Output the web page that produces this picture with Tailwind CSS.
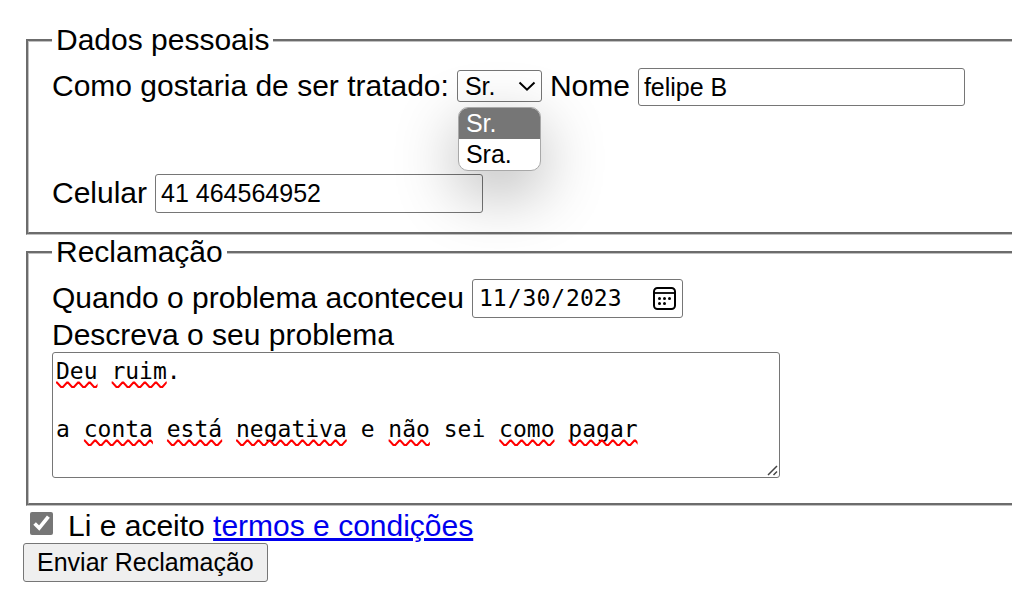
<!DOCTYPE html>
<html lang="pt-BR">
<head>
<meta charset="utf-8">
<meta name="viewport" content="width=device-width, initial-scale=1">
<title>Reclamação</title>
<script src="https://cdn.jsdelivr.net/npm/@tailwindcss/browser@4"></script>
</head>
<body class="overflow-x-hidden bg-white text-black">
<form class="pt-[23px] pl-[26px] font-['Liberation_Sans',Arial,sans-serif] text-[30px] leading-[34px]">
  <fieldset class="border-[3px] border-r-0 [border-style:groove] border-[#c0c0c0] pt-[11px] pr-6 pb-[19px] pl-[23px]">
    <legend class="px-1">Dados pessoais</legend>
    <div class="flex items-center gap-2">
      <label for="trato" class="pb-[2px] whitespace-nowrap">Como gostaria de ser tratado:</label>
      <div class="relative pb-[2px]">
        <select id="trato" class="block h-8 w-[85px] appearance-none rounded-[3px] border border-[#767676] bg-white pl-[7px] text-[25px] leading-[29px]">
          <option selected>Sr.</option>
          <option>Sra.</option>
        </select>
        <svg class="pointer-events-none absolute top-[11px] right-[6px] h-[11px] w-[18px]" viewBox="0 0 18 11" fill="none" stroke="#000" stroke-width="2" aria-hidden="true"><path d="M1.500 1.500 9 8.700l7.500-7.200"/></svg>
        <ul role="listbox" aria-label="Opções de tratamento" class="absolute top-[37px] left-px z-10 w-[83px] overflow-hidden rounded-[10px] border border-[#a8a8a8] bg-white text-[25px] leading-[31px] shadow-[0_20px_64px_rgba(0,0,0,0.3)]">
          <li role="option" aria-selected="true" class="bg-[#767676] pl-[7px] text-white">Sr.</li>
          <li role="option" aria-selected="false" class="pl-[7px]">Sra.</li>
        </ul>
      </div>
      <label for="nome" class="pb-[2px]">Nome</label>
      <input id="nome" type="text" value="felipe B" class="h-[38px] w-[327px] rounded-[3px] border border-[#767676] bg-white px-[5px] text-[25px] leading-[29px]">
    </div>
    <div class="mt-[68px] flex items-center gap-2">
      <label for="celular" class="pb-[2px]">Celular</label>
      <input id="celular" type="tel" value="41 464564952" class="h-[39px] w-[328px] rounded-[3px] border border-[#767676] bg-transparent px-[5px] text-[25px] leading-[29px]">
    </div>
  </fieldset>
  <fieldset class="border-[3px] border-r-0 [border-style:groove] border-[#c0c0c0] pt-[10px] pr-6 pb-[25px] pl-[23px]">
    <legend class="px-1">Reclamação</legend>
    <div class="flex items-center gap-2">
      <label for="data" class="pb-[2px]">Quando o problema aconteceu</label>
      <div class="relative">
        <input id="data" type="date" lang="en-US" value="2023-11-30" class="block h-[39px] w-[211px] rounded-[3px] border border-[#767676] bg-white px-[5px] font-['DejaVu_Sans_Mono',monospace] text-[23px] leading-[29px] [&::-webkit-calendar-picker-indicator]:opacity-0">
        <svg class="pointer-events-none absolute top-2 right-[7px] size-[23px]" viewBox="0 0 23 23" fill="none" stroke="#000" stroke-width="2" aria-hidden="true">
          <rect x="1" y="1" width="21" height="21" rx="3.500"/>
          <path d="M1 6h21" stroke-width="1.800"/>
          <g fill="#000" stroke="none"><circle cx="6.500" cy="11.500" r="1.500"/><circle cx="11.500" cy="11.500" r="1.500"/><circle cx="16.500" cy="11.500" r="1.500"/><circle cx="6.500" cy="16.500" r="1.500"/><circle cx="11.500" cy="16.500" r="1.500"/></g>
        </svg>
      </div>
    </div>
    <label for="problema" class="block">Descreva o seu problema</label>
    <div class="relative w-[728px] font-['DejaVu_Sans_Mono',monospace] text-[23px] leading-[29px]">
      <textarea id="problema" spellcheck="false" class="block h-[126px] w-full rounded-[3px] border border-[#767676] bg-white px-[3px] py-[4px]">Deu ruim.

a conta está negativa e não sei como pagar</textarea>
      <!-- spelling marks under the unknown words -->
      <svg class="pointer-events-none absolute top-0 left-1 h-[126px] w-[700px]" fill="none" stroke="#f00" stroke-width="2" aria-hidden="true">
        <defs><path id="wave" d="M0 1.500 L1 1.500 L5 6 L7 6 L11 1.500 L12 1.500 L16 6 L18 6 L22 1.500 L23 1.500 L27 6 L29 6 L33 1.500 L34 1.500 L38 6 L40 6 L44 1.500 L45 1.500 L49 6 L51 6 L55 1.500 L56 1.500 L60 6 L62 6 L66 1.500 L67 1.500 L71 6 L73 6 L77 1.500 L78 1.500 L82 6 L84 6 L88 1.500 L89 1.500 L93 6 L95 6 L99 1.500 L100 1.500 L104 6 L106 6 L110 1.500 L111 1.500"/></defs>
        <svg x="0ch" y="29" width="3ch" height="8"><use href="#wave"/></svg>
        <svg x="4ch" y="29" width="4ch" height="8"><use href="#wave"/></svg>
        <svg x="2ch" y="87" width="5ch" height="8"><use href="#wave"/></svg>
        <svg x="8ch" y="87" width="4ch" height="8"><use href="#wave"/></svg>
        <svg x="13ch" y="87" width="8ch" height="8"><use href="#wave"/></svg>
        <svg x="24ch" y="87" width="3ch" height="8"><use href="#wave"/></svg>
        <svg x="32ch" y="87" width="4ch" height="8"><use href="#wave"/></svg>
        <svg x="37ch" y="87" width="5ch" height="8"><use href="#wave"/></svg>
      </svg>
      <svg class="pointer-events-none absolute right-[2px] bottom-[2px] size-[11px] bg-white" viewBox="0 0 11 11" stroke="#444" stroke-width="1.500" aria-hidden="true"><path d="M1 10 10 1M6.500 10 10 6.500"/></svg>
    </div>
  </fieldset>
  <div class="mt-[3px] flex items-center pl-1">
    <input id="aceito" type="checkbox" checked class="mb-[5px] size-[23px] accent-[#767676]">
    <label for="aceito" class="ml-[15px]">Li e aceito <a href="#termos" class="text-[#0000ee] underline">termos e condições</a></label>
  </div>
  <button type="submit" class="-ml-[3px] block h-[39px] rounded-[3px] border border-[#767676] bg-[#efefef] px-[13px] text-[25px] leading-[29px]">Enviar Reclamação</button>
</form>
</body>
</html>
